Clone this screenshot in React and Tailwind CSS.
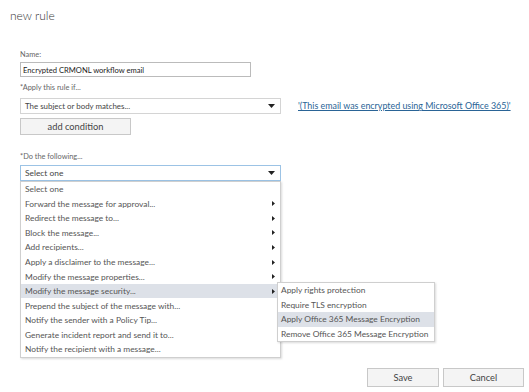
import { useState } from 'react'

const actions = [
  { label: 'Select one', sub: false },
  { label: 'Forward the message for approval...', sub: true },
  { label: 'Redirect the message to...', sub: true },
  { label: 'Block the message...', sub: true },
  { label: 'Add recipients...', sub: true },
  { label: 'Apply a disclaimer to the message...', sub: true },
  { label: 'Modify the message properties...', sub: true },
  { label: 'Modify the message security...', sub: true, active: true },
  { label: 'Prepend the subject of the message with...', sub: false },
  { label: 'Notify the sender with a Policy Tip...', sub: false },
  { label: 'Generate incident report and send it to...', sub: false },
  { label: 'Notify the recipient with a message...', sub: false },
]

const security = [
  'Apply rights protection',
  'Require TLS encryption',
  'Apply Office 365 Message Encryption',
  'Remove Office 365 Message Encryption',
]

function DownArrow() {
  return (
    <svg width="7" height="4" viewBox="0 0 7 4" className="shrink-0">
      <path d="M0 0h7L3.5 4z" fill="#222" />
    </svg>
  )
}

function RightArrow() {
  return (
    <svg width="3" height="5" viewBox="0 0 3 5" className="shrink-0">
      <path d="M0 0l3 2.5L0 5z" fill="#222" />
    </svg>
  )
}

export default function App() {
  const [hoverSub] = useState(2)

  return (
    <div className="relative w-[529px] h-[392px] bg-white flex flex-col text-[#444] text-[8.4px] leading-[10px] whitespace-nowrap font-['Lato','Open_Sans',sans-serif]">
      <h1 className="pl-[10px] pt-[6px] text-[12px] font-light text-[#333] leading-[20px]">new rule</h1>

      <div className="ml-[20px] mt-[24px]">
        <p className="text-[7.4px] leading-[10px] text-[#666]">Name:</p>
        <div className="mt-[2px] w-[231px] h-[15px] border border-[#bbb] flex items-center px-[2px] text-[7.6px] text-[#222]">
          Encrypted CRMONL workflow email
        </div>

        <p className="mt-[6px] text-[7.4px] leading-[10px] text-[#666]">*Apply this rule if...</p>
        <div className="mt-[5px] flex items-center">
          <div className="w-[261px] h-[16px] border border-[#d4d4d4] flex items-center justify-between pl-[4px] pr-[5px] text-[7.9px] text-[#444]">
            <span>The subject or body matches...</span>
            <DownArrow />
          </div>
          <a className="ml-[17px] text-[8.9px] text-[#2a6496] underline">'(This email was encrypted using Microsoft Office 365)'</a>
        </div>

        <button className="mt-[4px] w-[111px] h-[17px] border border-[#c8c8c8] bg-[#f4f4f4] text-[9.3px] text-[#444] flex items-center justify-center">
          add condition
        </button>

        <p className="mt-[17px] text-[7.4px] leading-[10px] text-[#666]">*Do the following...</p>
        <div className="relative mt-[3px] w-[261px] h-[16px] border border-[#9cc3e5] flex items-center justify-between pl-[4px] pr-[5px] text-[#444]">
          <span>Select one</span>
          <DownArrow />

          <div className="absolute left-[-1px] top-[15px] w-[261px] border border-[#cfcfcf] bg-white shadow-[1px_1px_2px_rgba(0,0,0,0.15)] z-10">
            {actions.map((a) => (
              <div
                key={a.label}
                className={`h-[14.55px] flex items-center justify-between pl-[4px] pr-[5px] ${a.active ? 'bg-[#dde1e8]' : ''}`}
              >
                <span className="text-[#555]">{a.label}</span>
                {a.sub && <RightArrow />}
              </div>
            ))}
          </div>

          <div className="absolute left-[256px] top-[116px] w-[158px] border border-[#cfcfcf] bg-white shadow-[1px_1px_2px_rgba(0,0,0,0.15)] z-20">
            {security.map((s, i) => (
              <div
                key={s}
                className={`h-[14.55px] flex items-center pl-[3px] text-[#555] ${i === hoverSub ? 'bg-[#dde1e8]' : ''}`}
              >
                {s}
              </div>
            ))}
          </div>
        </div>
      </div>

      <div className="mt-auto mb-[5px] mr-[5px] flex justify-end gap-[4px]">
        <button className="w-[72px] h-[19px] border border-[#c8c8c8] bg-[#f4f4f4] text-[9.3px] text-[#444]">Save</button>
        <button className="w-[81px] h-[19px] border border-[#c8c8c8] bg-[#f4f4f4] text-[9.3px] text-[#444]">Cancel</button>
      </div>
    </div>
  )
}
